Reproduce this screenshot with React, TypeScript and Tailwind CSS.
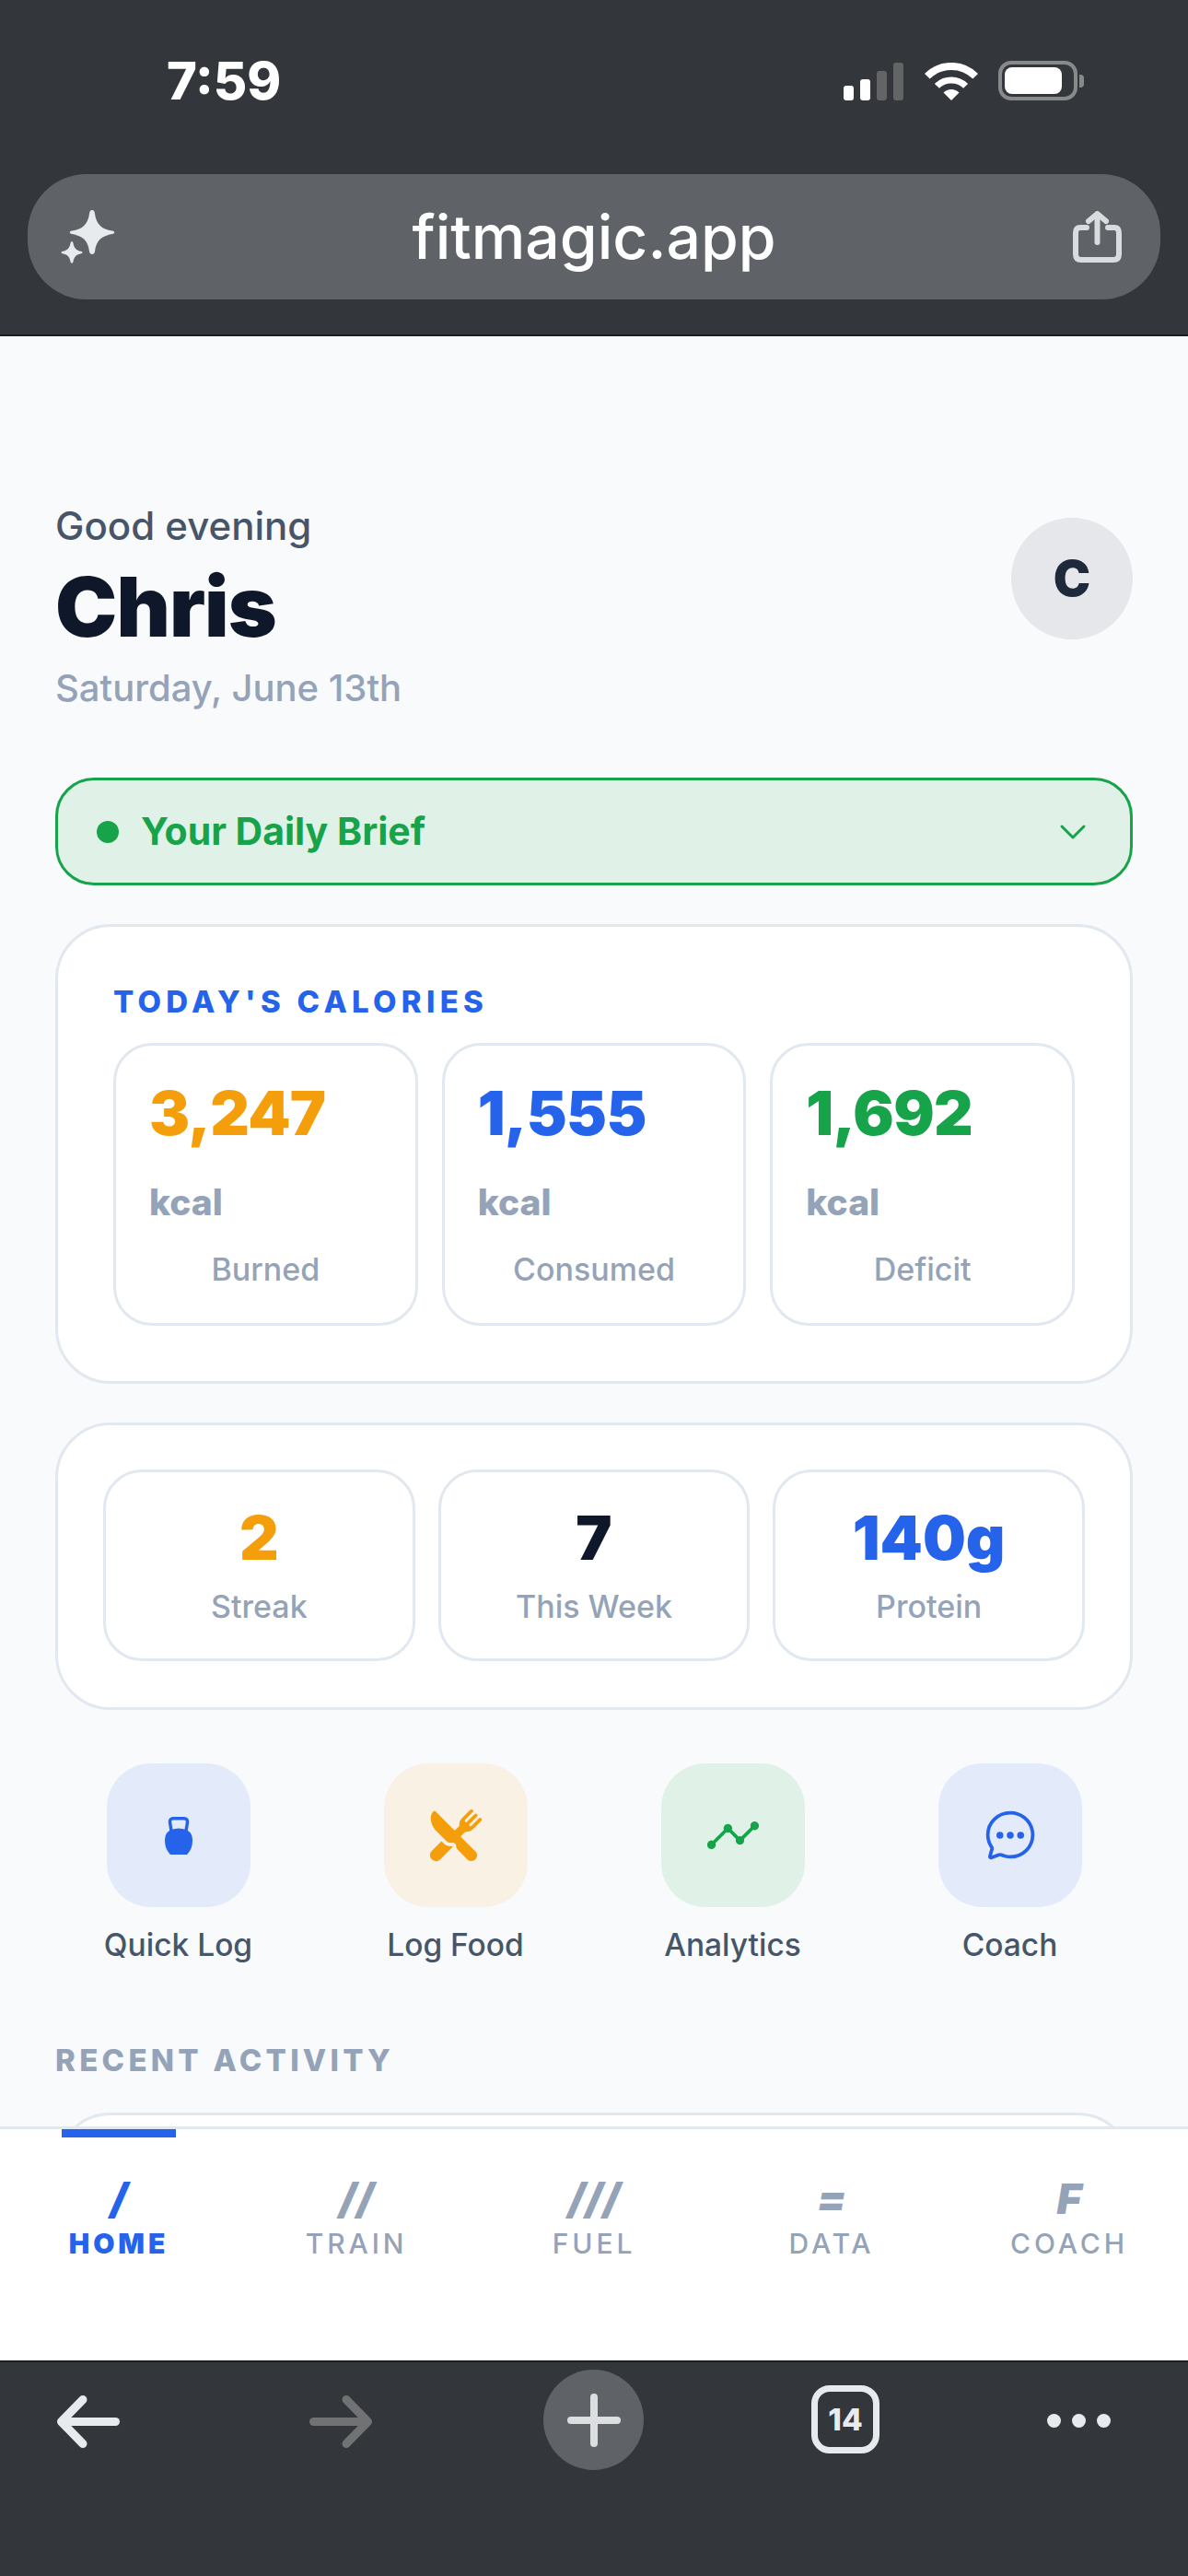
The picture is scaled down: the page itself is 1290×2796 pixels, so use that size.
import { ChevronDown } from "lucide-react";
import {
  IoAnalytics,
  IoChatbubbleEllipsesOutline,
  IoRestaurant,
} from "react-icons/io5";

const calories = [
  { value: "3,247", label: "Burned", color: "text-[#f59e0b]" },
  { value: "1,555", label: "Consumed", color: "text-[#2563eb]" },
  { value: "1,692", label: "Deficit", color: "text-[#16a34a]" },
];

const stats = [
  { value: "2", label: "Streak", color: "text-[#f59e0b]" },
  { value: "7", label: "This Week", color: "text-[#0f172a]" },
  { value: "140g", label: "Protein", color: "text-[#2563eb]" },
];

const navItems = [
  { glyph: "/", label: "HOME", active: true },
  { glyph: "//", label: "TRAIN", active: false },
  { glyph: "///", label: "FUEL", active: false },
  { glyph: "=", label: "DATA", active: false },
  { glyph: "F", label: "COACH", active: false },
];

const Kettlebell = () => (
  <svg width="30" height="41" viewBox="0 0 30 41" fill="#2563eb">
    <path
      d="M7 15 L5.5 6 Q5.2 1.75 9 1.75 H21 Q24.8 1.75 24.5 6 L23 15"
      fill="none"
      stroke="#2563eb"
      strokeWidth="3.5"
    />
    <path d="M7 14 Q15 11 23 14 C28 16 30 20 30 26 C30 32 28 37 24 41 H6 C2 37 0 32 0 26 C0 20 2 16 7 14Z" />
  </svg>
);

const actions = [
  { label: "Quick Log", bg: "bg-[#e3eafa]", icon: <Kettlebell /> },
  { label: "Log Food", bg: "bg-[#f9f1e4]", icon: <IoRestaurant size={60} color="#f59e0b" /> },
  { label: "Analytics", bg: "bg-[#e0f1e8]", icon: <IoAnalytics size={60} color="#16a34a" /> },
  { label: "Coach", bg: "bg-[#e3eafa]", icon: <IoChatbubbleEllipsesOutline size={60} color="#2563eb" /> },
];

const SignalBars = () => (
  <div className="flex items-end gap-[7px]">
    <div className="h-[16px] w-[11px] rounded-[3px] bg-white" />
    <div className="h-[23px] w-[11px] rounded-[3px] bg-white" />
    <div className="h-[32px] w-[11px] rounded-[3px] bg-[#626466]" />
    <div className="h-[41px] w-[11px] rounded-[3px] bg-[#626466]" />
  </div>
);

const Wifi = () => (
  <svg width="58" height="41" viewBox="0 0 58 41" fill="none" stroke="#fff">
    <path d="M2.8 14.8 A37 37 0 0 1 55.2 14.8" strokeWidth="8" />
    <path d="M13.4 25.4 A22 22 0 0 1 44.6 25.4" strokeWidth="7" />
    <path d="M29 41 L20.5 32.5 A12 12 0 0 1 37.5 32.5 Z" fill="#fff" stroke="none" />
  </svg>
);

const Battery = () => (
  <div className="-ml-[1px] flex items-center gap-[2px]">
    <div className="flex h-[43px] w-[86px] items-center rounded-[14px] border-[4px] border-[#87898b] p-[3px]">
      <div className="h-full w-[62px] rounded-[8px] bg-white" />
    </div>
    <div className="h-[14px] w-[5px] rounded-r-[4px] bg-[#87898b]" />
  </div>
);

const Sparkles = () => (
  <svg width="59" height="58" viewBox="0 0 59 58" fill="#e8ebee">
    <path d="M34 0 C36 0 36.5 1 37 4 C38.5 15 44 21 56 22.5 C59 23 59 25.5 56 26 C44 28 38.5 33 37 45 C36.5 49 31.5 49 31 45 C29.5 33 24 28 12 26 C9 25.5 9 23 12 22.5 C24 21 29.5 15 31 4 C31.5 1 32 0 34 0Z" />
    <path d="M12 34 C13 34 13.2 35 13.5 36 C14.2 41 17 44 22 44.8 C24 45.3 24 46.7 22 47.2 C17 48 14.2 51 13.5 56 C13.2 58 10.8 58 10.5 56 C9.8 51 7 48 2 47.2 C0 46.7 0 45.3 2 44.8 C7 44 9.8 41 10.5 36 C10.8 35 11 34 12 34Z" />
  </svg>
);

const Share = () => (
  <svg width="53" height="56" viewBox="0 0 53 56" fill="none" stroke="#d9dbde" strokeWidth="6" strokeLinecap="round" strokeLinejoin="round">
    <path d="M15 18 H8 Q3 18 3 24 V47 Q3 53 9 53 H44 Q50 53 50 47 V24 Q50 18 45 18 H38" />
    <path d="M26.5 34 V4" />
    <path d="M17 11 L26.5 3 L36 11" />
  </svg>
);

const Arrow = ({ flip, color }: { flip?: boolean; color: string }) => (
  <svg
    width="68"
    height="57"
    viewBox="0 0 68 57"
    fill="none"
    stroke={color}
    strokeWidth="9"
    strokeLinecap="round"
    strokeLinejoin="round"
    className={flip ? "-scale-x-100" : ""}
  >
    <path d="M63.5 28.5 H6" />
    <path d="M28 4.5 L4.5 28.5 L28 52.5" />
  </svg>
);

export default function App() {
  return (
    <div className="flex h-[2796px] w-[1290px] flex-col overflow-hidden bg-[#f8fafc] font-['Inter',sans-serif]">
      {/* browser top */}
      <div className="h-[365px] shrink-0 border-b-[2px] border-[#1c1e20] bg-[#33363a]">
        <div className="flex h-[189px] items-start justify-between pl-[181px] pr-[113px] pt-[56px]">
          <span className="text-[56px] font-extrabold leading-[64px] text-white">7:59</span>
          <div className="mt-[10px] flex items-end gap-[23px]">
            <SignalBars />
            <Wifi />
            <Battery />
          </div>
        </div>
        <div className="mx-[30px] flex h-[136px] items-center justify-between rounded-[64px] bg-[#5f6367] pl-[36px] pr-[42px]">
          <Sparkles />
          <span className="text-[66px] font-medium leading-none text-white">fitmagic.app</span>
          <Share />
        </div>
      </div>

      {/* page */}
      <main className="min-h-0 flex-1 overflow-hidden px-[60px] pt-[176px]">
        <div className="flex items-start justify-between">
          <div>
            <p className="text-[42px] font-medium leading-[60px] text-[#475569]">Good evening</p>
            <h1 className="mt-[8px] text-[90px] font-black leading-[100px] tracking-[-0.01em] text-[#0f172a]">Chris</h1>
            <p className="mt-[10px] text-[40px] font-medium leading-[56px] text-[#94a3b8]">Saturday, June 13th</p>
          </div>
          <div className="mt-[21px] flex h-[132px] w-[132px] items-center justify-center rounded-full bg-[#e5e7eb]">
            <span className="text-[54px] font-black leading-none text-[#1e293b]">C</span>
          </div>
        </div>

        <div className="mt-[69px] flex h-[117px] items-center justify-between rounded-[42px] border-[3px] border-[#16a34a] bg-[#e0f1e8] pl-[42px] pr-[38px]">
          <div className="flex items-center gap-[24px]">
            <div className="h-[24px] w-[24px] rounded-full bg-[#16a34a]" />
            <span className="text-[41px] font-bold leading-none text-[#16a34a]">Your Daily Brief</span>
          </div>
          <ChevronDown size={48} strokeWidth={1.5} color="#16a34a" />
        </div>

        <section className="mt-[42px] rounded-[60px] border-[3px] border-[#e2e8f0] bg-white px-[60px] pb-[60px] pt-[61px]">
          <h2 className="text-[33px] font-extrabold leading-[40px] tracking-[0.16em] text-[#2563eb]">TODAY'S CALORIES</h2>
          <div className="mt-[25px] grid grid-cols-3 gap-[26px]">
            {calories.map((item) => (
              <div key={item.label} className="h-[307px] rounded-[42px] border-[3px] border-[#e2e8f0] bg-white pl-[36px] pr-[20px] pt-[33px]">
                <p className={`text-[66px] font-black leading-[80px] tracking-[-0.01em] ${item.color}`}>{item.value}</p>
                <p className="mt-[33px] text-[39px] font-extrabold leading-[48px] text-[#94a3b8]">kcal</p>
                <p className="-ml-[16px] mt-[25px] text-center text-[34px] font-medium leading-[48px] text-[#94a3b8]">{item.label}</p>
              </div>
            ))}
          </div>
        </section>

        <section className="mt-[42px] grid h-[312px] grid-cols-3 items-start gap-[25px] rounded-[60px] border-[3px] border-[#e2e8f0] bg-white px-[49px] pt-[48px]">
          {stats.map((item) => (
            <div key={item.label} className="flex h-[208px] flex-col items-center rounded-[42px] border-[3px] border-[#e2e8f0] bg-white pt-[33px]">
              <p className={`text-[66px] font-black leading-[76px] ${item.color}`}>{item.value}</p>
              <p className="mt-[13px] text-[34px] font-medium leading-[48px] text-[#94a3b8]">{item.label}</p>
            </div>
          ))}
        </section>

        <div className="mt-[58px] grid grid-cols-4 gap-[34px]">
          {actions.map((item) => (
            <div key={item.label} className="flex flex-col items-center">
              <div className={`flex h-[156px] w-[156px] items-center justify-center rounded-[48px] ${item.bg}`}>
                {item.icon}
              </div>
              <span className="mt-[17px] text-[33.5px] font-medium leading-[48px] text-[#475569]">{item.label}</span>
            </div>
          ))}
        </div>

        <h2 className="mt-[81px] text-[33px] font-extrabold leading-[40px] tracking-[0.13em] text-[#94a3b8]">RECENT ACTIVITY</h2>
        <div className="mt-[37px] h-[300px] rounded-[60px] border-[3px] border-[#e2e8f0] bg-white" />
      </main>

      {/* tab bar */}
      <nav className="relative grid h-[254px] shrink-0 grid-cols-5 border-t-[3px] border-[#e2e8f0] bg-white">
        {navItems.map((item) => (
          <div key={item.label} className="relative flex flex-col items-center pt-[50px]">
            {item.active && <div className="absolute left-[67px] top-0 h-[9px] w-[124px] bg-[#2563eb]" />}
            <span className={`text-[46px] font-black italic leading-[50px] ${item.active ? "text-[#2563eb]" : "text-[#94a3b8]"}`}>
              {item.glyph}
            </span>
            <span className={`mt-[6px] text-[30px] leading-[36px] tracking-[0.13em] ${item.active ? "font-black text-[#2563eb]" : "font-medium text-[#94a3b8]"}`}>
              {item.label}
            </span>
          </div>
        ))}
      </nav>

      {/* browser bottom */}
      <div className="flex h-[234px] shrink-0 items-start border-t-[2px] border-[#1c1e20] bg-[#33363a] pl-[62px] pt-[8px]">
        <div className="mt-[28px]">
          <Arrow color="#e8ebee" />
        </div>
        <div className="ml-[206px] mt-[28px]">
          <Arrow flip color="#707274" />
        </div>
        <div className="ml-[186px] flex h-[109px] w-[109px] items-center justify-center rounded-full bg-[#5f6367]">
          <svg width="58" height="58" viewBox="0 0 58 58" fill="none" stroke="#dcdee0" strokeWidth="8" strokeLinecap="round">
            <path d="M29 4 V54" />
            <path d="M4 29 H54" />
          </svg>
        </div>
        <div className="ml-[182px] mt-[17px] flex h-[74px] w-[74px] items-center justify-center rounded-[20px] border-[7px] border-[#e8ebee]">
          <span className="text-[33px] font-extrabold leading-none text-[#e8ebee]">14</span>
        </div>
        <div className="ml-[182px] mt-[48px] flex gap-[12px]">
          <div className="h-[15px] w-[15px] rounded-full bg-[#e8ebee]" />
          <div className="h-[15px] w-[15px] rounded-full bg-[#e8ebee]" />
          <div className="h-[15px] w-[15px] rounded-full bg-[#e8ebee]" />
        </div>
      </div>
    </div>
  );
}
